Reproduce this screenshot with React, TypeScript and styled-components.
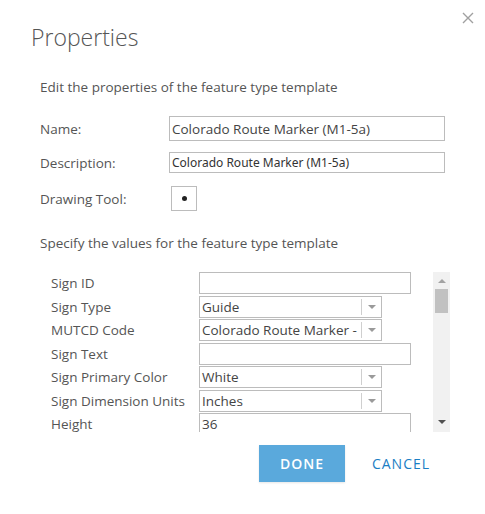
import React from "react";
import styled, { createGlobalStyle } from "styled-components";

const GlobalStyle = createGlobalStyle`
  html, body {
    margin: 0;
    padding: 0;
    background: #ffffff;
  }
  body {
    font-family: "Open Sans", "Noto Sans", sans-serif;
    color: #555;
  }
`;

const uiFont = `"Open Sans", "Noto Sans", sans-serif`;

type Field = {
  label: string;
  kind: "text" | "select";
  value?: string;
};

const fields: Field[] = [
  { label: "Sign ID", kind: "text" },
  { label: "Sign Type", kind: "select", value: "Guide" },
  { label: "MUTCD Code", kind: "select", value: "Colorado Route Marker -" },
  { label: "Sign Text", kind: "text" },
  { label: "Sign Primary Color", kind: "select", value: "White" },
  { label: "Sign Dimension Units", kind: "select", value: "Inches" },
  { label: "Height", kind: "text", value: "36" },
];

const CloseIcon = () => (
  <svg width="12" height="12" viewBox="0 0 12 12">
    <path d="M1 1 L11 11 M11 1 L1 11" stroke="#a0a0a0" strokeWidth="1.4" fill="none" />
  </svg>
);

const App = () => {
  return (
    <>
      <GlobalStyle />
      <Dialog>
        <Header>
          <Title>Properties</Title>
          <CloseButton aria-label="Close">
            <CloseIcon />
          </CloseButton>
        </Header>

        <Body>
          <Intro>Edit the properties of the feature type template</Intro>

          <FormRow $gap={11}>
            <FormLabel>Name:</FormLabel>
            <NameInput defaultValue="Colorado Route Marker (M1-5a)" />
          </FormRow>

          <FormRow $gap={13}>
            <FormLabel>Description:</FormLabel>
            <DescInput defaultValue="Colorado Route Marker (M1-5a)" />
          </FormRow>

          <FormRow $gap={23}>
            <FormLabel>Drawing Tool:</FormLabel>
            <ToolButton aria-label="Point">
              <Dot />
            </ToolButton>
          </FormRow>

          <Intro>Specify the values for the feature type template</Intro>

          <TableWrap>
            <TablePane>
              <AttrGrid>
                {fields.map((f) => (
                  <React.Fragment key={f.label}>
                    <AttrLabel>{f.label}</AttrLabel>
                    {f.kind === "text" ? (
                      <AttrInput defaultValue={f.value ?? ""} />
                    ) : (
                      <Select>
                        <SelectValue>{f.value}</SelectValue>
                        <SelectArrow>
                          <ArrowDown />
                        </SelectArrow>
                      </Select>
                    )}
                  </React.Fragment>
                ))}
              </AttrGrid>
            </TablePane>
            <Scrollbar>
              <ScrollArrowUp />
              <Thumb />
              <ScrollSpacer />
              <ScrollArrowDown />
            </Scrollbar>
          </TableWrap>
        </Body>

        <Footer>
          <DoneButton>DONE</DoneButton>
          <CancelButton>CANCEL</CancelButton>
        </Footer>
      </Dialog>
    </>
  );
};

const Dialog = styled.div`
  width: 485px;
  height: 514px;
  box-sizing: border-box;
  display: flex;
  flex-direction: column;
`;

const Header = styled.div`
  display: flex;
  justify-content: space-between;
  align-items: flex-start;
  padding: 0 11px 0 31px;
`;

const Title = styled.h1`
  margin: 22px 0 0;
  font-family: ${uiFont};
  font-size: 23px;
  line-height: 30px;
  font-weight: 300;
  color: #555;
`;

const CloseButton = styled.button`
  margin-top: 12px;
  padding: 0;
  border: none;
  background: none;
  width: 12px;
  height: 12px;
  display: flex;
`;

const Body = styled.div`
  display: flex;
  flex-direction: column;
  padding: 0 40px;
`;

const Intro = styled.p`
  margin: 26px 0 20px;
  font-size: 13.5px;
  line-height: 18px;
  color: #555;

  & + & {
    margin-top: 0;
  }
`;

const FormRow = styled.div<{ $gap: number }>`
  display: flex;
  align-items: center;
  margin-bottom: ${(p) => p.$gap}px;

  & + ${Intro} {
    margin-top: 0;
  }
`;

const FormLabel = styled.label`
  width: 129px;
  flex-shrink: 0;
  font-size: 13.5px;
  line-height: 18px;
  color: #555;
`;

const NameInput = styled.input`
  flex: 1;
  height: 25px;
  box-sizing: border-box;
  border: 1px solid #bcbcbc;
  padding: 0 2px;
  font-family: ${uiFont};
  font-size: 13.5px;
  color: #444;
  outline: none;
`;

const DescInput = styled.input`
  flex: 1;
  height: 21px;
  box-sizing: border-box;
  border: 1px solid #bcbcbc;
  padding: 0 2px;
  font-family: "Noto Sans", sans-serif;
  font-size: 12px;
  color: #333;
  outline: none;
`;

const ToolButton = styled.button`
  margin-left: 2px;
  width: 26px;
  height: 25px;
  box-sizing: border-box;
  border: 1px solid #bcbcbc;
  background: #fff;
  padding: 0;
  display: flex;
  align-items: center;
  justify-content: center;
`;

const Dot = styled.span`
  width: 5px;
  height: 5px;
  border-radius: 50%;
  background: #222;
`;

const TableWrap = styled.div`
  display: flex;
  height: 160px;
  margin-right: -5px;
`;

const TablePane = styled.div`
  flex: 1;
  overflow: hidden;
  padding-left: 11px;
`;

const AttrGrid = styled.div`
  display: grid;
  grid-template-columns: 148px 1fr;
  grid-auto-rows: 22px;
  row-gap: 1.5px;
  align-items: center;
`;

const AttrLabel = styled.span`
  font-size: 13.5px;
  line-height: 18px;
  color: #555;
  white-space: nowrap;
`;

const AttrInput = styled.input`
  width: 212px;
  height: 22px;
  box-sizing: border-box;
  border: 1px solid #bcbcbc;
  padding: 0 2px;
  font-family: ${uiFont};
  font-size: 13.5px;
  color: #444;
  outline: none;
`;

const Select = styled.div`
  width: 183px;
  height: 22px;
  box-sizing: border-box;
  border: 1px solid #bcbcbc;
  display: flex;
  align-items: stretch;
`;

const SelectValue = styled.span`
  flex: 1;
  padding-left: 2px;
  font-size: 13.5px;
  line-height: 20px;
  color: #444;
  white-space: nowrap;
  overflow: hidden;
`;

const SelectArrow = styled.span`
  width: 19px;
  margin: 2px 0;
  border-left: 1px solid #cfcfcf;
  display: flex;
  align-items: center;
  justify-content: center;
`;

const ArrowDown = styled.span`
  width: 0;
  height: 0;
  border-left: 4px solid transparent;
  border-right: 4px solid transparent;
  border-top: 4px solid #9a9a9a;
`;

const Scrollbar = styled.div`
  width: 17px;
  background: #f1f1f1;
  display: flex;
  flex-direction: column;
  align-items: center;
`;

const ScrollArrowUp = styled.span`
  margin-top: 7px;
  width: 0;
  height: 0;
  border-left: 4px solid transparent;
  border-right: 4px solid transparent;
  border-bottom: 4px solid #a3a3a3;
`;

const Thumb = styled.span`
  margin-top: 6px;
  width: 13px;
  height: 24px;
  background: #c1c1c1;
`;

const ScrollSpacer = styled.span`
  flex: 1;
`;

const ScrollArrowDown = styled.span`
  margin-bottom: 8px;
  width: 0;
  height: 0;
  border-left: 4px solid transparent;
  border-right: 4px solid transparent;
  border-top: 4px solid #505050;
`;

const Footer = styled.div`
  display: flex;
  justify-content: flex-end;
  gap: 13px;
  padding: 13px 41px 0 0;
`;

const DoneButton = styled.button`
  width: 86px;
  height: 37px;
  border: none;
  background: #5aa9dc;
  color: #fff;
  font-family: ${uiFont};
  font-size: 14px;
  font-weight: 600;
  letter-spacing: 1px;
  padding: 0;
  box-shadow: 0 1px 2px rgba(0, 0, 0, 0.1);
`;

const CancelButton = styled.button`
  width: 86px;
  height: 37px;
  border: none;
  background: none;
  color: #1a7ec4;
  font-family: ${uiFont};
  font-size: 14px;
  font-weight: 400;
  letter-spacing: 1px;
  padding: 0;
`;

export default App;
